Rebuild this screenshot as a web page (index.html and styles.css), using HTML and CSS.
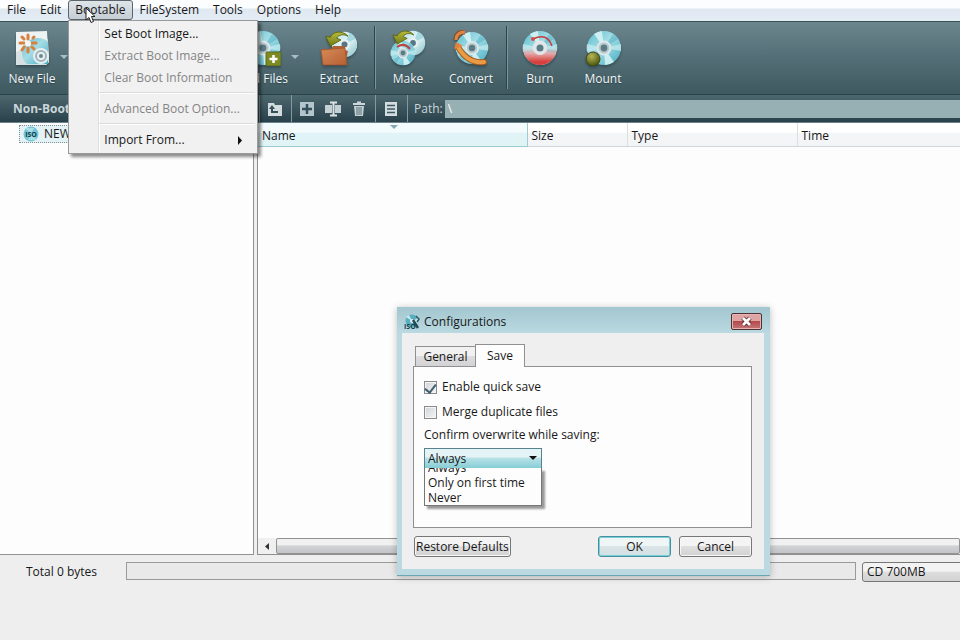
FILE: index.html
```html
<!DOCTYPE html>
<html lang="en">
<head>
<meta charset="utf-8">
<title>Disc Image Editor</title>
<link rel="stylesheet" href="styles.css">
</head>
<body>
<svg class="defs" aria-hidden="true">
  <defs>
    <linearGradient id="discFill" x1="0" y1="0" x2="1" y2="1">
      <stop offset="0" stop-color="#5dbdcf"/><stop offset=".45" stop-color="#a5dde6"/><stop offset="1" stop-color="#45adc1"/>
    </linearGradient>
    <linearGradient id="paleFill" x1="0" y1="0" x2="1" y2="1">
      <stop offset="0" stop-color="#b5dfe6"/><stop offset=".5" stop-color="#e3f5f6"/><stop offset="1" stop-color="#83bfca"/>
    </linearGradient>
    <linearGradient id="redFade" x1="0" y1="0" x2="0" y2="1">
      <stop offset=".5" stop-color="#e9b5b5" stop-opacity="0"/><stop offset=".66" stop-color="#e3aaaa"/><stop offset=".9" stop-color="#d8403c"/>
    </linearGradient>
    <linearGradient id="folderFill" x1="0" y1="0" x2="1" y2="1">
      <stop offset="0" stop-color="#d98a57"/><stop offset="1" stop-color="#b45f34"/>
    </linearGradient>
    <linearGradient id="greenFill" x1="0" y1="0" x2="0" y2="1">
      <stop offset="0" stop-color="#b9bb3c"/><stop offset="1" stop-color="#6f7a17"/>
    </linearGradient>
    <radialGradient id="ballFill" cx=".4" cy=".3" r=".7">
      <stop offset="0" stop-color="#b5b75a"/><stop offset="1" stop-color="#4e560c"/>
    </radialGradient>
    <symbol id="disc" viewBox="0 0 36 36">
      <circle cx="18" cy="18" r="17" fill="url(#discFill)"/>
      <path d="M18 18 8 4a17 17 0 0 1 8-3zM18 18 28 32a17 17 0 0 1-9 3z" fill="#e0f7f8" opacity=".8"/>
      <path d="M18 18 35 14a17 17 0 0 1 0 7zM18 18 1 22a17 17 0 0 1 0-8z" fill="#c9eef1" opacity=".7"/>
      <path d="M18 18 27 4a17 17 0 0 1 5 5zM18 18 9 32a17 17 0 0 1-5-5z" fill="#2f9bb1" opacity=".35"/>
      <circle cx="18" cy="18" r="7.5" fill="#dde8ea"/>
      <circle cx="18" cy="18" r="5.5" fill="#b9c9ce"/>
      <circle cx="18" cy="18" r="3.4" fill="#5a7c85"/>
    </symbol>
    <symbol id="paleDisc" viewBox="0 0 36 36">
      <circle cx="18" cy="18" r="17" fill="url(#paleFill)"/>
      <path d="M18 18 25 2a17 17 0 0 1 8 8zM18 18 9 33a17 17 0 0 1-6-7z" fill="#7fc6d2" opacity=".6"/>
      <circle cx="18" cy="18" r="7" fill="#e9f0f1"/>
      <circle cx="18" cy="18" r="4" fill="#557781"/>
    </symbol>
    <symbol id="arrow" viewBox="0 0 28 18">
      <path d="M27 6C21-1 10 0 7 7L2 6l5 11 12-7-5-2c3-4 8-5 13-2z" fill="url(#greenFill)" stroke="#59620f" stroke-width="1"/>
    </symbol>
  </defs>
</svg>

<nav class="menubar" aria-label="Main menu">
  <button type="button">File</button>
  <button type="button">Edit</button>
  <div class="menu-host">
    <button type="button" class="open" aria-expanded="true">Bootable</button>
    <div class="menu" role="menu">
      <button type="button" role="menuitem">Set Boot Image...</button>
      <button type="button" role="menuitem" disabled>Extract Boot Image...</button>
      <button type="button" role="menuitem" disabled>Clear Boot Information</button>
      <hr>
      <button type="button" role="menuitem" disabled>Advanced Boot Option...</button>
      <hr>
      <button type="button" role="menuitem">Import From...<svg width="6" height="9" viewBox="0 0 6 9"><path d="M1 0 5 4.500 1 9z" fill="#111"/></svg></button>
    </div>
    <svg class="cursor" width="12" height="19" viewBox="0 0 12 19"><path d="M1 1v12l3-2.500 2 5 2.500-1-2-5H10z" fill="#fff" stroke="#222"/></svg>
  </div>
  <button type="button">FileSystem</button>
  <button type="button">Tools</button>
  <button type="button">Options</button>
  <button type="button">Help</button>
</nav>

<div class="toolbar" role="toolbar" aria-label="Image tools">
  <div class="group first">
    <button type="button" class="tool">
      <svg viewBox="0 0 36 36"><path d="M2 2 33 1l2 31-3 3H2z" fill="#edf2f3"/><path d="M2 22 34 9l1 23-3 3H2z" fill="#d7e1e4"/><path d="M9 19c3-12 19-14 25-7v22H13C9 31 7 25 9 19z" fill="url(#discFill)"/><circle cx="27" cy="26" r="8" fill="#e9eff0"/><circle cx="27" cy="26" r="5" fill="none" stroke="#9db4ba" stroke-width="2"/><circle cx="27" cy="26" r="2" fill="#6b8890"/><g stroke="#d9803c" stroke-width="3" stroke-linecap="round"><path d="M14 5v4M14 18v4M6 13h4M18 13h4M8 7l2 2M18 17l2 2M8 20l2-3M19 8l1-1"/></g><circle cx="14" cy="13.500" r="3" fill="#f4f5f2"/></svg>
      <span>New File</span>
    </button>
    <button type="button" class="drop" aria-label="New file options"></button>
  </div>
  <div class="group second">
    <button type="button" class="tool">
      <svg viewBox="0 0 36 36"><use href="#disc" width="36" height="36"/><rect x="21" y="22" width="15" height="14" rx="1" fill="#7d8a22" stroke="#5c6816"/><path d="M28.500 25v8M24.500 29h8" stroke="#fff" stroke-width="2.500"/></svg>
      <span>Add Files</span>
    </button>
    <button type="button" class="drop" aria-label="Add files options"></button>
  </div>
  <div class="group spaced">
    <button type="button" class="tool">
      <svg viewBox="0 0 36 36"><use href="#paleDisc" x="10" y="1" width="27" height="27"/><path d="M0 19h10l2-3h12v4l3 1-3 14H2z" fill="#b05f35"/><path d="m0 20 24-2 2 17H2z" fill="url(#folderFill)" stroke="#9c502a" stroke-width=".7"/><use href="#arrow" x="3" y="1" width="25" height="16"/></svg>
      <span>Extract</span>
    </button>
  </div>
  <div class="group ruled">
    <button type="button" class="tool">
      <svg viewBox="0 0 36 36"><use href="#paleDisc" x="10" y="0" width="26" height="26"/><use href="#disc" x="0" y="10" width="26" height="26"/><path d="M7 17q7-5 13 2" fill="none" stroke="#bd4541" stroke-width="2"/><use href="#arrow" x="1" y="0" width="24" height="15"/></svg>
      <span>Make</span>
    </button>
    <button type="button" class="tool">
      <svg viewBox="0 0 36 36"><use href="#disc" x="2" y="1" width="34" height="34"/><path d="M3 10q0-8 9-8" fill="none" stroke="#8d4c22" stroke-width="5"/><path d="M3 10q0-8 9-8" fill="none" stroke="#dc8545" stroke-width="3"/><path d="M5 17q10 17 26 15" fill="none" stroke="#a65a1e" stroke-width="6" stroke-linecap="round"/><path d="M5 17q10 17 26 15" fill="none" stroke="#ea9b43" stroke-width="4" stroke-linecap="round"/><path d="m1 19 2-7 7 4" fill="#e3803c"/></svg>
      <span>Convert</span>
    </button>
  </div>
  <div class="group ruled">
    <button type="button" class="tool">
      <svg viewBox="0 0 36 36"><use href="#disc" width="36" height="36"/><circle cx="18" cy="18" r="17" fill="url(#redFade)"/><circle cx="18" cy="18" r="7" fill="#e2e6e9"/><circle cx="18" cy="18" r="3.500" fill="#5a7c85"/><path d="M11 9q14-7 19 7" fill="none" stroke="#cb3c3b" stroke-width="1.500"/><circle cx="11" cy="9" r="2" fill="#d84a48"/></svg>
      <span>Burn</span>
    </button>
    <button type="button" class="tool">
      <svg viewBox="0 0 36 36"><use href="#disc" x="1" width="36" height="36"/><circle cx="8" cy="29" r="7" fill="url(#ballFill)" stroke="#414812"/></svg>
      <span>Mount</span>
    </button>
  </div>
</div>

<div class="pathbar">
  <strong>Non-Bootable</strong>
  <div class="cell"><button type="button" aria-label="Up one level"><svg viewBox="0 0 16 16"><path d="M1 2h6l1 2h7v11H1z" fill="#d2dcdf"/><path d="M5 6v5h6" fill="none" stroke="#34505a" stroke-width="2"/><path d="m2 8 3-4 3 4z" fill="#34505a"/></svg></button></div>
  <div class="cell">
    <button type="button" aria-label="New folder"><svg viewBox="0 0 16 16"><path d="M1 1h14v14H1z" fill="#b4c6cb"/><path d="M8 3v10M3 8h10" stroke="#34505a" stroke-width="2.500"/></svg></button>
    <button type="button" aria-label="Rename"><svg viewBox="0 0 16 16"><path d="M0 4h7v8H0zM10 4h6v8h-6z" fill="#c3d0d4"/><path d="M5 1.500h7M5 14.500h7M8.500 1v14" stroke="#dbe3e5" stroke-width="2"/></svg></button>
    <button type="button" aria-label="Delete"><svg viewBox="0 0 16 16"><path d="M2 3h12M6 1.500h4" stroke="#ccd6d9" stroke-width="2"/><path d="M3 5h10l-1 10H4z" fill="#c6d1d4"/><path d="M6 6v8M8 6v8M10 6v8" stroke="#56707a"/></svg></button>
  </div>
  <div class="cell"><button type="button" aria-label="List view"><svg viewBox="0 0 16 16"><path d="M2 1h12v14H2z" fill="#d3dde0"/><path d="M4 4.500h8M4 8h8M4 11.500h8" stroke="#3f5962" stroke-width="1.500"/></svg></button></div>
  <div class="cell path"><label for="path">Path:</label><input id="path" type="text" value="\"></div>
</div>

<main class="workspace">
  <aside class="tree">
    <div class="node">
      <svg width="18" height="16" viewBox="0 0 18 16"><circle cx="9" cy="8" r="7.500" fill="#74c5d5"/><path d="M9 8 3 2h9zM9 8l6 6H6z" fill="#a9e0e8"/><text x="9" y="10.500" text-anchor="middle" class="iso">ISO</text></svg>
      NEW
    </div>
  </aside>
  <section class="files">
    <table>
      <thead><tr><th class="name">Name<svg width="8" height="4" viewBox="0 0 8 4"><path d="M0 0h8L4 4z" fill="#84aab4"/></svg></th><th class="size">Size</th><th class="type">Type</th><th>Time</th></tr></thead>
    </table>
    <div class="scroll">
      <button type="button" aria-label="Scroll left"><svg width="4" height="7" viewBox="0 0 4 7"><path d="M4 0v7L0 3.500z" fill="#333"/></svg></button>
      <div class="thumb"></div>
    </div>
  </section>
</main>

<footer class="status">
  <span>Total 0 bytes</span>
  <div class="meter"></div>
  <select aria-label="Disc size"><option>CD 700MB</option></select>
</footer>

<section class="dialog" role="dialog" aria-labelledby="dialog-title">
  <header>
    <svg width="16" height="16" viewBox="0 0 16 16"><circle cx="8" cy="7" r="6.500" fill="#59afbf"/><path d="m8 7-6-4 3-2zM8 7l6-3v6z" fill="#c8eaf0"/><circle cx="8" cy="7" r="2" fill="#e4eff1"/><path d="m9 6 5 8" stroke="#244a56" stroke-width="2.500"/><path d="M12 2l3 3-2 3" fill="none" stroke="#315965" stroke-width="1.500"/><text x="0" y="15" class="iso">ISO</text></svg>
    <h1 id="dialog-title">Configurations</h1>
    <button type="button" class="close" aria-label="Close"><svg width="13" height="11" viewBox="0 0 13 11"><path d="m3 2 7 7M10 2 3 9" stroke="#5a2929" stroke-width="4.500"/><path d="m3 2 7 7M10 2 3 9" stroke="#fff" stroke-width="2.800"/></svg></button>
  </header>
  <div class="body">
    <div class="tabs" role="tablist">
      <button type="button" role="tab">General</button>
      <button type="button" role="tab" aria-selected="true" class="active">Save</button>
    </div>
    <div class="panel" role="tabpanel">
      <label class="check"><input type="checkbox" checked>Enable quick save</label>
      <label class="check"><input type="checkbox">Merge duplicate files</label>
      <label class="caption" for="overwrite">Confirm overwrite while saving:</label>
      <div class="combo">
        <select id="overwrite"><option>Always</option><option>Only on first time</option><option>Never</option></select>
        <ul class="options"><li>Always</li><li>Only on first time</li><li>Never</li></ul>
      </div>
    </div>
    <div class="actions">
      <button type="button" class="restore">Restore Defaults</button>
      <button type="button" class="default">OK</button>
      <button type="button">Cancel</button>
    </div>
  </div>
</section>
</body>
</html>
```
FILE: styles.css
```css
* { box-sizing: border-box; }

body {
  margin: 0;
  min-height: 100vh;
  position: relative;
  display: flex;
  flex-direction: column;
  overflow: hidden;
  background: #eeeeef;
  color: #181818;
  font: 12px/16px "Open Sans", "Noto Sans", sans-serif;
}

button, input, select { font: inherit; color: inherit; margin: 0; }
button { padding: 0; border: 0; background: none; white-space: nowrap; }
.defs { position: absolute; width: 0; height: 0; }
.iso { font: bold 7px "Open Sans", sans-serif; fill: #173c49; }

/* Menu bar */
.menubar {
  display: flex;
  height: 21px;
  background: linear-gradient(#fcfdfe 0 8px, #dfe8f1 9px, #e4edf4);
}
.menubar > button, .menu-host > button {
  height: 20px;
  padding: 0 6px;
  border: 1px solid transparent;
}
.menu-host { position: relative; }
.menu-host > .open {
  border-color: #5c656b;
  border-radius: 3px;
  background: linear-gradient(#dfe4e8, #c5ced5);
}
.menu {
  position: absolute;
  z-index: 3;
  top: 20px;
  left: 0;
  width: 190px;
  padding: 2px;
  border: 1px solid #9a9a9a;
  background: linear-gradient(90deg, #f0f0f0 29px, #dfdfdf 29px 30px, #fff 30px 31px, #f1f1f1 31px);
  box-shadow: 3px 3px 3px rgba(0, 0, 0, .45);
}
.menu button {
  display: flex;
  align-items: center;
  justify-content: space-between;
  width: 100%;
  height: 22px;
  padding: 0 12px 0 33px;
}
.menu button:disabled { color: #858585; }
.menu hr {
  height: 2px;
  margin: 3px 0 4px 28px;
  border: 0;
  border-top: 1px solid #dcdcdc;
  background: #fff;
}
.cursor { position: absolute; z-index: 4; top: 7px; left: 17px; }

/* Toolbar */
.toolbar {
  display: flex;
  height: 73px;
  border-top: 1px solid #3c5057;
  background: linear-gradient(#6b868d, #557078 45%, #3f5960);
  color: #f0f4f5;
}
.group { display: flex; gap: 9px; padding-top: 8px; }
.group.first { width: 231px; padding-left: 5px; gap: 0; }
.group.second { gap: 0; padding-left: 5px; }
.group.spaced { padding-left: 12px; padding-right: 8px; }
.group.ruled { position: relative; padding-left: 7px; padding-right: 8px; }
.group.ruled::before {
  content: "";
  position: absolute;
  left: 0;
  top: 4px;
  width: 2px;
  height: 63px;
  background: linear-gradient(90deg, #2d444c 50%, #7b959c 50%);
}
.tool {
  display: flex;
  flex-direction: column;
  align-items: center;
  width: 54px;
  gap: 5px;
  align-self: flex-start;
  text-shadow: 0 1px 1px #2d444c;
}
.tool svg { width: 36px; height: 36px; filter: drop-shadow(0 2px 1px rgba(20, 40, 46, .4)); }
.drop { position: relative; width: 10px; height: 54px; }
.drop::before {
  content: "";
  display: block;
  margin: 0 auto;
  width: 0;
  border: 4px solid transparent;
  border-top-color: #a7bdc2;
  border-bottom: 0;
}

/* Path bar */
.pathbar {
  display: flex;
  align-items: center;
  height: 29px;
  border-top: 1px solid #2b4149;
  border-bottom: 1px solid #6c8288;
  background: linear-gradient(#4d676f, #29414a);
  color: #cad7da;
}
.pathbar strong { width: 259px; padding-left: 13px; }
.cell {
  display: flex;
  align-items: center;
  align-self: stretch;
  gap: 10px;
  padding: 0 8px 0 7px;
  border-left: 1px solid #8299a0;
}
.cell button, .cell button svg { display: block; width: 16px; height: 16px; }
.cell.path { flex: 1; gap: 2px; padding: 0 0 0 6px; }
.cell input {
  flex: 1;
  min-width: 0;
  height: 18px;
  padding: 0 3px;
  border: 0;
  background: #97b0b4;
  color: #fff;
}

/* Workspace */
.workspace { display: flex; flex: 1; gap: 3px; }
.tree {
  width: 254px;
  border: solid #929292;
  border-width: 0 1px 1px 0;
  background: #fdfdfd;
}
.node {
  display: flex;
  align-items: center;
  gap: 4px;
  height: 18px;
  margin: 2px 80px 0 19px;
  padding-left: 2px;
  border: 1px dotted #7f9298;
  background: #e3f2f5;
}
.files {
  flex: 1;
  display: flex;
  flex-direction: column;
  justify-content: space-between;
  border: solid #8f8f8f;
  border-width: 0 0 1px 1px;
  background: #fdfdfd;
}
table { width: 100%; border-collapse: collapse; table-layout: fixed; }
th {
  position: relative;
  height: 23px;
  padding: 3px 4px 0;
  border-right: 1px solid #dcdfe1;
  border-bottom: 1px solid #d4d6d8;
  background: linear-gradient(#fff 40%, #f4f5f6 45%, #f3f4f5);
  font-weight: normal;
  text-align: left;
}
th:last-child { border-right: 0; }
th.name {
  width: 269px;
  border-color: #9fcbd2;
  background: linear-gradient(#f3fbfc 40%, #e0f3f6 45%, #e0f4f6);
}
th.name svg { position: absolute; top: 2px; left: 49%; }
th.size { width: 100px; }
th.type { width: 170px; }
.scroll { display: flex; height: 16px; background: #f0f0f0; }
.scroll button { width: 18px; }
.scroll svg { display: block; margin: auto; }
.thumb {
  flex: 1;
  border: 1px solid #929292;
  border-radius: 2px;
  background: linear-gradient(#f1f1f1 40%, #d2d3d5 50%, #c3c4c8);
}

/* Status bar */
.status {
  display: flex;
  align-items: flex-start;
  height: 85px;
  padding: 7px 0 0 26px;
  overflow: hidden;
}
.status span { width: 100px; line-height: 20px; }
.meter { flex: 1; height: 18px; border: 1px solid #9a9a9a; background: #e9e9e9; }
.status select {
  appearance: none;
  width: 102px;
  height: 20px;
  margin: 0 -4px 0 6px;
  padding: 0 4px;
  border: 1px solid #777;
  border-radius: 3px;
  background: linear-gradient(#f3f3f3 45%, #dedede 50%, #d2d2d3);
}

/* Dialog */
.dialog {
  position: absolute;
  z-index: 5;
  top: 307px;
  left: 397px;
  width: 373px;
  padding: 0 6px 6px 5px;
  border-bottom: 1px solid #6ca5b2;
  background: linear-gradient(#a3c6cf, #bad9e1 26px);
  box-shadow: 0 1px 7px rgba(0, 0, 0, .25);
}
.dialog header { display: flex; align-items: center; gap: 4px; height: 26px; padding: 3px 2px 0; }
.dialog h1 { flex: 1; margin: 0; font-size: 12px; font-weight: normal; }
.close {
  display: flex;
  align-items: center;
  justify-content: center;
  width: 31px;
  height: 17px;
  border: 1px solid #542f32;
  border-radius: 2px;
  background: linear-gradient(#dfa5a5 45%, #b34a4c 50%, #c47679);
  box-shadow: inset 0 0 0 1px #e3b5b5;
}
.body { padding: 11px 12px 12px 11px; background: #efeff0; }
.tabs { display: flex; align-items: flex-end; padding-left: 2px; }
.tabs button {
  position: relative;
  width: 61px;
  height: 20px;
  border: 1px solid #909090;
  border-bottom: 0;
  background: linear-gradient(#f1f1f1 45%, #dddddf 50%, #d3d3d6);
}
.tabs .active { width: 50px; height: 23px; margin: 0 0 -1px -1px; background: #fdfdfd; }
.panel {
  height: 162px;
  padding: 12px 10px;
  border: 1px solid #909090;
  background: #fdfdfd;
}
.check { display: flex; align-items: center; gap: 5px; height: 16px; margin-bottom: 9px; }
.check input {
  appearance: none;
  display: flex;
  justify-content: center;
  width: 13px;
  height: 13px;
  border: 1px solid #8a8c8f;
  background: linear-gradient(135deg, #cfd2d6, #f6f6f6);
  box-shadow: inset 0 0 0 1px #f4f4f4;
}
.check input:checked::before {
  content: "";
  width: 5px;
  height: 9px;
  border: solid #40606f;
  border-width: 0 2px 2px 0;
  transform: rotate(38deg);
}
.caption { display: block; margin-top: -2px; }
.combo { position: relative; width: 118px; margin-top: 5px; }
.combo select {
  appearance: none;
  display: block;
  width: 100%;
  height: 21px;
  padding: 0 3px;
  border: 1px solid #56838d;
  background: linear-gradient(#e4f3f5 40%, #b7e1e6 50%, #86cdd5);
}
.combo::after {
  content: "";
  position: absolute;
  top: 8px;
  right: 5px;
  border: 4px solid transparent;
  border-top-color: #111;
  border-bottom: 0;
}
.options {
  position: absolute;
  top: 20px;
  left: 0;
  width: 100%;
  height: 38px;
  margin: 0;
  padding: 0 3px;
  border: 1px solid #777;
  border-top: 0;
  display: flex;
  flex-direction: column;
  justify-content: flex-end;
  overflow: hidden;
  background: #fdfdfd;
  box-shadow: 3px 3px 2px rgba(0, 0, 0, .4);
  list-style: none;
  line-height: 15px;
}
.options li { flex: none; }
.actions { display: flex; gap: 8px; padding: 8px 0 0 1px; }
.actions button {
  width: 73px;
  height: 21px;
  border: 1px solid #777;
  border-radius: 3px;
  background: linear-gradient(#f4f4f4 45%, #dfdfe0 50%, #d2d2d4);
  box-shadow: inset 0 0 0 1px #f7f7f7;
}
.actions .restore { width: auto; padding: 0 1px; margin-right: auto; }
.actions .default {
  border-color: #4a8e9b;
  background: linear-gradient(#f0f5f6 45%, #dbe5e8 50%, #d3dfe2);
  box-shadow: inset 0 0 0 1px #75d2dd;
}
```
